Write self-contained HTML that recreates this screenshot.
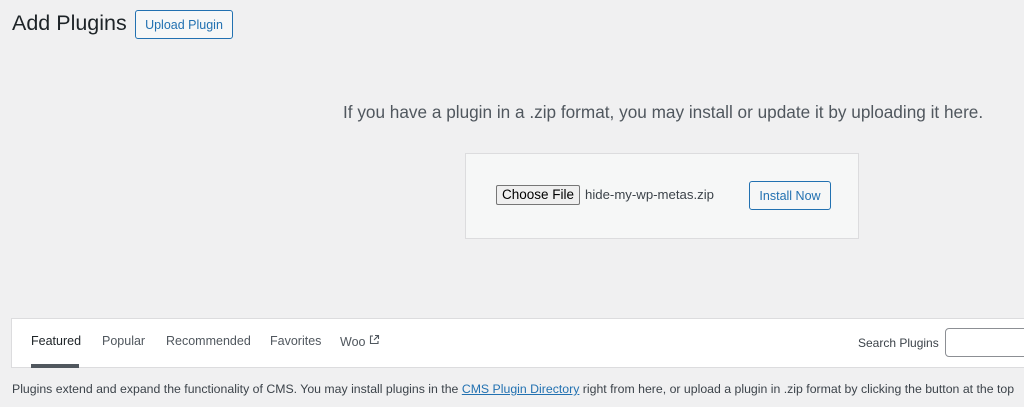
<!DOCTYPE html>
<html><head><style>
body{margin:0;width:1024px;height:407px;background:#f0f0f1;font-family:"Liberation Sans",sans-serif;color:#3c434a;position:relative;overflow:hidden}
.a{position:absolute;white-space:nowrap}
.btn{position:absolute;border:1px solid #2271b1;color:#2271b1;background:#f6f7f7;border-radius:3px;font-size:12.5px;display:flex;align-items:center;justify-content:center;box-sizing:border-box}
.tab{position:absolute;top:334px;font-size:12.5px;color:#50575e}
</style></head><body>
<div class="a" style="left:12px;top:11px;font-size:21.5px;color:#1d2327">Add Plugins</div>
<div class="btn" style="left:135px;top:10px;width:98px;height:29px">Upload Plugin</div>
<div class="a" style="left:343px;top:102px;font-size:17.2px;color:#50575e">If you have a plugin in a .zip format, you may install or update it by uploading it here.</div>
<div class="a" style="left:465px;top:153px;width:394px;height:86px;background:#f6f7f7;border:1px solid #dcdcde;box-sizing:border-box"></div>
<div class="a" style="left:496px;top:185px;width:84px;height:20px;box-sizing:border-box;border:1px solid #767676;background:#efefef;border-radius:2px;font-size:13.5px;color:#000;text-align:center;line-height:18px">Choose File</div>
<div class="a" style="left:585px;top:187px;font-size:13.2px;color:#3c434a">hide-my-wp-metas.zip</div>
<div class="btn" style="left:749px;top:181px;width:82px;height:29px">Install Now</div>
<div class="a" style="left:11px;top:318px;width:1020px;height:50px;background:#fff;border:1px solid #dcdcde;box-sizing:border-box"></div>
<div class="tab" style="left:31px;color:#1d2327">Featured</div>
<div class="a" style="left:31px;top:364px;width:48px;height:4px;background:#50575e"></div>
<div class="tab" style="left:102px">Popular</div>
<div class="tab" style="left:166px">Recommended</div>
<div class="tab" style="left:270px">Favorites</div>
<div class="tab" style="left:340px">Woo <svg width="11" height="11" viewBox="0 0 11 11" style="vertical-align:1px"><path d="M4 2H1.5v7.5H9V7M6 1.5h3.5V5M9.5 1.5L5 6" fill="none" stroke="#50575e" stroke-width="1.1"/></svg></div>
<div class="a" style="left:858px;top:336px;font-size:12px;color:#3c434a">Search Plugins</div>
<div class="a" style="left:945px;top:328px;width:100px;height:29px;background:#fff;border:1px solid #8c8f94;border-radius:4px;box-sizing:border-box"></div>
<div class="a" style="left:12px;top:382px;font-size:12.3px;color:#3c434a">Plugins extend and expand the functionality of CMS. You may install plugins in the <span style="color:#2271b1;text-decoration:underline">CMS Plugin Directory</span> right from here, or upload a plugin in .zip format by clicking the button at the top</div>
</body></html>
